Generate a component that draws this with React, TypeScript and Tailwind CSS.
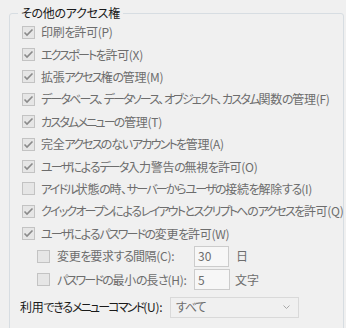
import React from "react";

const font = "font-['Meiryo_UI','Noto_Sans_CJK_JP',sans-serif] [font-feature-settings:'palt']";

const items = [
  { label: "印刷を許可(P)", checked: true },
  { label: "エクスポートを許可(X)", checked: true },
  { label: "拡張アクセス権の管理(M)", checked: true },
  { label: "データベース、データソース、オブジェクト、カスタム関数の管理(F)", checked: true },
  { label: "カスタムメニューの管理(T)", checked: true },
  { label: "完全アクセスのないアカウントを管理(A)", checked: true },
  { label: "ユーザによるデータ入力警告の無視を許可(O)", checked: true },
  { label: "アイドル状態の時、サーバーからユーザの接続を解除する(I)", checked: false },
  { label: "クイックオープンによるレイアウトとスクリプトへのアクセスを許可(Q)", checked: true },
  { label: "ユーザによるパスワードの変更を許可(W)", checked: true },
];

// the ui font has narrow kana, so kana runs are set tighter than kanji
function Txt({ s }: { s: string }) {
  const parts = s.split(/([\u30A0-\u30FF]+|[\u3040-\u309F]+)/);
  return (
    <span className="tracking-[-0.3px]">
      {parts.map((p, i) => {
        if (i % 2 === 0) return p;
        const kata = /[\u30A0-\u30FF]/.test(p);
        return (
          <span key={i} className={kata ? "tracking-[-1.8px]" : "tracking-[-1.2px]"}>
            {p}
          </span>
        );
      })}
    </span>
  );
}

function Box({ checked }: { checked: boolean }) {
  return (
    <span className="flex h-[13px] w-[13px] shrink-0 items-center justify-center border border-[#c3c3c3] bg-[#e6e6e6]">
      {checked && (
        <svg width="11" height="11" viewBox="0 0 11 11" fill="none">
          <path d="M1.5 5.5 L4 8 L9.5 2.5" stroke="#8a8a8a" strokeWidth="1.6" />
        </svg>
      )}
    </span>
  );
}

export default function App() {
  return (
    <div className={`h-[328px] w-[346px] overflow-hidden bg-[#f0f0f0] text-[12px] text-[#6d6d6d] ${font}`}>
      <fieldset className="ml-[9px] mr-[2px] mt-[5px] h-[340px] min-w-0 rounded-[3px] border border-[#d7dde2] pl-[12px]">
        <legend className="-ml-[4px] px-[3px] leading-[16px] text-[#1a1a1a] tracking-[-0.3px]">その他のアクセス権</legend>
        <div className="flex flex-col">
          {items.map((it) => (
            <div key={it.label} className="flex h-[22.4px] items-center gap-[6px] whitespace-nowrap">
              <Box checked={it.checked} />
              <Txt s={it.label} />
            </div>
          ))}
          <div className="flex h-[22.4px] items-center whitespace-nowrap">
            <div className="ml-[15px] flex w-[157px] items-center gap-[7px]">
              <Box checked={false} />
              <Txt s="変更を要求する間隔(C):" />
            </div>
            <div className="flex h-[21px] w-[35px] items-center border border-[#cccccc] bg-[#f7f7f7] px-[3px]">30</div>
            <span className="ml-[7px]">日</span>
          </div>
          <div className="flex h-[25px] items-center whitespace-nowrap">
            <div className="ml-[15px] flex w-[157px] items-center gap-[7px]">
              <Box checked={false} />
              <Txt s="パスワードの最小の長さ(H):" />
            </div>
            <div className="flex h-[21px] w-[36px] items-center border border-[#cccccc] bg-[#f7f7f7] px-[3px]">5</div>
            <span className="ml-[5px]">文字</span>
          </div>
          <div className="-ml-[2px] mt-[4.5px] flex h-[21px] items-center whitespace-nowrap">
            <span className="w-[150px] text-[#1a1a1a]">
              <Txt s="利用できるメニューコマンド(U):" />
            </span>
            <div className="flex h-[21px] w-[129px] items-center justify-between border border-[#d9d9d9] bg-[#f0f0f0] pl-[5px] pr-[8px]">
              <Txt s="すべて" />
              <svg width="7" height="5" viewBox="0 0 7 5" fill="none">
                <path d="M0.5 0.5 L3.5 3.5 L6.5 0.5" stroke="#a8a8a8" strokeWidth="1" />
              </svg>
            </div>
          </div>
        </div>
      </fieldset>
    </div>
  );
}
